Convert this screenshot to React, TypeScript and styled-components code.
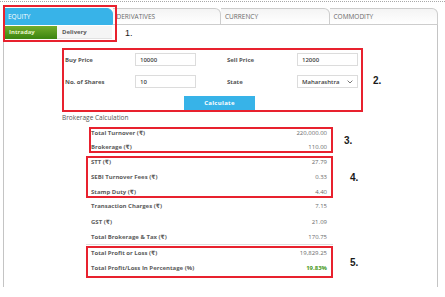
import React from "react";
import styled, { createGlobalStyle } from "styled-components";

const GlobalStyle = createGlobalStyle`
    html, body {
        margin: 0;
        padding: 0;
        background: #ffffff;
    }
    body {
        font-family: 'Open Sans', 'DejaVu Sans', sans-serif;
        width: 445px;
        height: 297px;
        overflow: hidden;
    }
    * {
        box-sizing: border-box;
    }
`

const Page = styled.div`
    margin-top: 1px;
    border-top: 1px dotted #a8a8a8;
    height: 296px;
`

const Frame = styled.div`
    position: relative;
    margin: 6px 0 0 3px;
    width: 435px;
`

const TabBar = styled.div`
    display: flex;
    height: 17px;
`

const Tab = styled.div<{ $active?: boolean }>`
    flex: 1;
    display: flex;
    align-items: center;
    padding-left: 4px;
    font-size: 6.5px;
    text-transform: uppercase;
    border-top-right-radius: 6px;
    color: ${p => p.$active ? "#ffffff" : "#6a6a6a"};
    background: ${p => p.$active ? "#38b3e8" : "linear-gradient(#f4f4f4, #ffffff)"};
    border: 1px solid ${p => p.$active ? "#38b3e8" : "#cdcdcd"};
    border-left: ${p => p.$active ? "1px solid #38b3e8" : "none"};
`

const Panel = styled.div`
    border-left: 1px solid #c4c4c4;
    border-right: 1px solid #c4c4c4;
    padding-bottom: 9px;
    display: flex;
    flex-direction: column;
`

const SubTabRow = styled.div`
    display: flex;
    align-items: center;
    margin-top: 1px;
    height: 13px;
`

const SubTab = styled.div<{ $active?: boolean; $width: number }>`
    width: ${p => p.$width}px;
    height: 13px;
    display: flex;
    align-items: center;
    padding-left: 5px;
    font-size: 6px;
    font-weight: 700;
    color: ${p => p.$active ? "#e6f3c8" : "#5a5a5a"};
    background: ${p => p.$active ? "linear-gradient(#73ad2c, #3f8712)" : "#f5f5f5"};
    border-bottom: 1px solid ${p => p.$active ? "#3f8712" : "#e2e2e2"};
`

const Marker = styled.span<{ $bold?: boolean; $gap: number }>`
    margin-left: ${p => p.$gap}px;
    font-family: 'Liberation Sans', 'Open Sans', sans-serif;
    font-size: ${p => p.$bold ? 10 : 9}px;
    font-weight: ${p => p.$bold ? 700 : 400};
    color: #1a1a1a;
`

const Highlight = styled.div`
    position: absolute;
    left: 0;
    top: -3px;
    width: 114px;
    height: 37px;
    border: 2px solid #e8212e;
    pointer-events: none;
`

const Annotated = styled.div<{ $indent: number; $top: number }>`
    display: flex;
    align-items: center;
    margin-left: ${p => p.$indent}px;
    margin-top: ${p => p.$top}px;
`

const FormBox = styled.div`
    width: 301px;
    height: 64px;
    border: 2px solid #e8212e;
    padding: 3px 3px 0 1px;
    display: flex;
    flex-direction: column;
`

const FormGrid = styled.div`
    display: grid;
    grid-template-columns: 70px 61px 31px 70px 61px;
    grid-auto-rows: 13px;
    row-gap: 9px;
    align-items: center;
`

const FieldLabel = styled.span`
    font-size: 6px;
    font-weight: 700;
    color: #555555;
`

const Input = styled.div`
    height: 13px;
    border: 1px solid #dcdcdc;
    display: flex;
    align-items: center;
    justify-content: space-between;
    padding: 0 4px;
    font-size: 6px;
    font-weight: 600;
    color: #444444;
`

const ButtonRow = styled.div`
    display: flex;
    margin-top: auto;
    padding-left: 119px;
`

const CalcButton = styled.button`
    width: 71px;
    height: 14px;
    border: none;
    background: #37b3e8;
    color: #ffffff;
    font-family: 'Open Sans', sans-serif;
    font-size: 6px;
    font-weight: 700;
    letter-spacing: 0.3px;
    padding: 0;
`

const SectionTitle = styled.div`
    margin: 2px 0 0 58px;
    height: 8px;
    line-height: 8px;
    font-size: 6.5px;
    color: #555555;
`

const Results = styled.div`
    display: flex;
    flex-direction: column;
    margin-left: 82px;
`

const Group = styled.div<{ $boxed?: boolean; $width: number; $gap: number; $pad?: string }>`
    width: ${p => p.$width}px;
    display: flex;
    flex-direction: column;
    gap: ${p => p.$gap}px;
    padding: ${p => p.$pad ?? "0"};
    border: ${p => p.$boxed ? "2px solid #e8212e" : "none"};
`

const Row = styled.div<{ $left: number; $right: number }>`
    display: flex;
    justify-content: space-between;
    align-items: center;
    height: 8px;
    padding: 0 ${p => p.$right}px 0 ${p => p.$left}px;
`

const RowLabel = styled.span`
    font-size: 6px;
    font-weight: 700;
    color: #5c5c5c;
`

const RowValue = styled.span<{ $green?: boolean }>`
    font-size: 6px;
    font-weight: ${p => p.$green ? 700 : 400};
    color: ${p => p.$green ? "#4a9a1c" : "#6a6a6a"};
`

const Divider = styled.div`
    width: 247px;
    height: 1px;
    background: #dedede;
    margin-top: 3px;
`

const Chevron = () => (
    <svg width="6" height="4" viewBox="0 0 6 4">
        <path d="M0.6 0.6 L3 3 L5.4 0.6" fill="none" stroke="#555" strokeWidth="0.8" />
    </svg>
)

interface Item {
    label: string
    value: string
    green?: boolean
}

const turnover: Item[] = [
    { label: "Total Turnover (₹)", value: "220,000.00" },
    { label: "Brokerage (₹)", value: "110.00" },
]

const charges: Item[] = [
    { label: "STT (₹)", value: "27.79" },
    { label: "SEBI Turnover Fees (₹)", value: "0.33" },
    { label: "Stamp Duty (₹)", value: "4.40" },
]

const others: Item[] = [
    { label: "Transaction Charges (₹)", value: "7.15" },
    { label: "GST (₹)", value: "21.09" },
    { label: "Total Brokerage & Tax (₹)", value: "170.75" },
]

const profit: Item[] = [
    { label: "Total Profit or Loss (₹)", value: "19,829.25" },
    { label: "Total Profit/Loss In Percentage (%)", value: "19.83%", green: true },
]

function renderRows(items: Item[], left: number, right: number) {
    return items.map(item => (
        <Row key={item.label} $left={left} $right={right}>
            <RowLabel>{item.label}</RowLabel>
            <RowValue $green={item.green}>{item.value}</RowValue>
        </Row>
    ))
}

function App() {
    return (
        <Page>
            <GlobalStyle />
            <Frame>
                <TabBar>
                    <Tab $active>Equity</Tab>
                    <Tab>Derivatives</Tab>
                    <Tab>Currency</Tab>
                    <Tab>Commodity</Tab>
                </TabBar>
                <Panel>
                    <SubTabRow>
                        <SubTab $active $width={53}>Intraday</SubTab>
                        <SubTab $width={55}>Delivery</SubTab>
                        <Marker $gap={13}>1.</Marker>
                    </SubTabRow>

                    <Annotated $indent={58} $top={9}>
                        <FormBox>
                            <FormGrid>
                                <FieldLabel>Buy Price</FieldLabel>
                                <Input>10000</Input>
                                <span />
                                <FieldLabel>Sell Price</FieldLabel>
                                <Input>12000</Input>
                                <FieldLabel>No. of Shares</FieldLabel>
                                <Input>10</Input>
                                <span />
                                <FieldLabel>State</FieldLabel>
                                <Input>Maharashtra <Chevron /></Input>
                            </FormGrid>
                            <ButtonRow>
                                <CalcButton>Calculate</CalcButton>
                            </ButtonRow>
                        </FormBox>
                        <Marker $bold $gap={10}>2.</Marker>
                    </Annotated>

                    <SectionTitle>Brokerage Calculation</SectionTitle>

                    <Results>
                        <Annotated $indent={3} $top={5}>
                            <Group $boxed $width={244} $gap={6}>
                                {renderRows(turnover, 0, 4)}
                            </Group>
                            <Marker $bold $gap={11}>3.</Marker>
                        </Annotated>
                        <Annotated $indent={0} $top={3}>
                            <Group $boxed $width={247} $gap={7}>
                                {renderRows(charges, 3, 4)}
                            </Group>
                            <Marker $bold $gap={17}>4.</Marker>
                        </Annotated>
                        <Group $width={247} $gap={7.5} $pad="4px 0 0">
                            {renderRows(others, 5, 6)}
                        </Group>
                        <Divider />
                        <Annotated $indent={0} $top={1}>
                            <Group $boxed $width={247} $gap={7} $pad="1px 0 4px">
                                {renderRows(profit, 3, 4)}
                            </Group>
                            <Marker $bold $gap={17}>5.</Marker>
                        </Annotated>
                    </Results>
                </Panel>
                <Highlight />
            </Frame>
        </Page>
    );
}

export default App;
